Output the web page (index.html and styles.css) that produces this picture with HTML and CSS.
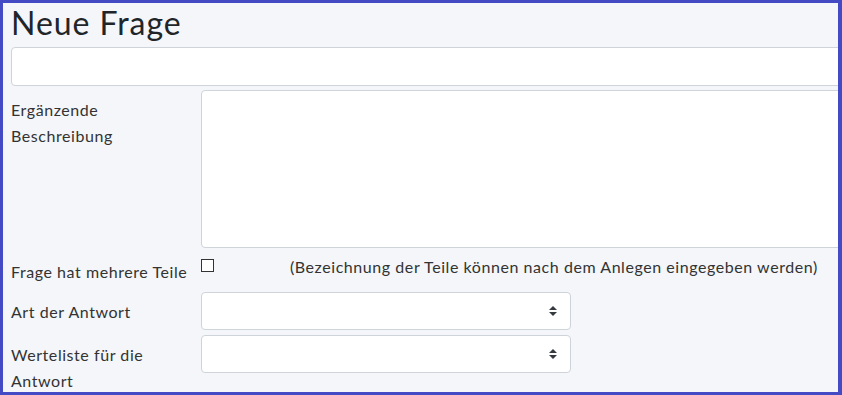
FILE: index.html
```html
<!DOCTYPE html>
<html lang="de">
<head>
<meta charset="utf-8">
<link rel="stylesheet" href="styles.css">
</head>
<body>
<div class="frame">
  <div class="content">
    <h2 class="title">Neue Frage</h2>
    <div class="form-control title-input"></div>
    <div class="row">
      <div class="col-label">Ergänzende<br>Beschreibung</div>
      <div class="col-field"><div class="form-control area"></div></div>
    </div>
    <div class="row row-check">
      <div class="col-label">Frage hat mehrere Teile</div>
      <div class="col-field check-field">
        <span class="checkbox"></span>
        <span class="hint">(Bezeichnung der Teile können nach dem Anlegen eingegeben werden)</span>
      </div>
    </div>
    <div class="row row-select">
      <div class="col-label">Art der Antwort</div>
      <div class="col-field">
        <div class="form-control select">
          <svg width="8" height="10" viewBox="0 0 4 5"><path d="M2 0L0 2h4zm0 5L0 3h4z" fill="#343a40"/></svg>
        </div>
      </div>
    </div>
    <div class="row row-select">
      <div class="col-label">Werteliste für die<br>Antwort</div>
      <div class="col-field">
        <div class="form-control select">
          <svg width="8" height="10" viewBox="0 0 4 5"><path d="M2 0L0 2h4zm0 5L0 3h4z" fill="#343a40"/></svg>
        </div>
      </div>
    </div>
  </div>
</div>
</body>
</html>
```
FILE: styles.css
```css
html, body {
  margin: 0;
  padding: 0;
}
body {
  font-family: Lato, "Open Sans", sans-serif;
  color: #333;
  font-size: 16px;
  line-height: 26px;
  letter-spacing: 0.035em;
}
.frame {
  box-sizing: border-box;
  width: 842px;
  height: 395px;
  border: 3px solid #4449c4;
  border-right-width: 4px;
  background: #f4f6f9;
  overflow: hidden;
}
.content {
  width: 900px;
  padding-left: 8px;
}
.title {
  margin: 0;
  font-size: 32px;
  font-weight: 400;
  line-height: 40px;
  height: 44px;
  color: #212529;
  letter-spacing: 0.03em;
}
.form-control {
  box-sizing: border-box;
  background: #fff;
  border: 1px solid #ced4da;
  border-radius: 4px;
}
.title-input {
  height: 39px;
  width: 100%;
  margin-bottom: 4px;
}
.row {
  display: flex;
  margin-bottom: 4px;
}
.col-label {
  width: 190px;
  flex: none;
  padding-top: 7px;
  box-sizing: border-box;
}
.col-field {
  flex: 1;
}
.area {
  height: 158px;
}
.row-check {
  height: 40px;
  margin-top: 0;
  margin-bottom: 0;
}
.check-field {
  display: flex;
  align-items: flex-start;
  padding-top: 7px;
}
.checkbox {
  box-sizing: border-box;
  width: 13px;
  height: 13px;
  border: 1px solid #333;
  background: #fff;
  margin-top: 0;
  flex: none;
}
.hint {
  margin-left: 76px;
  line-height: 18px;
  margin-top: -1px;
}
.row-select {
  margin-bottom: 5px;
}
.select {
  width: 370px;
  height: 38px;
  display: flex;
  align-items: center;
  justify-content: flex-end;
  padding-right: 13px;
}
.select svg {
  display: block;
}
```
